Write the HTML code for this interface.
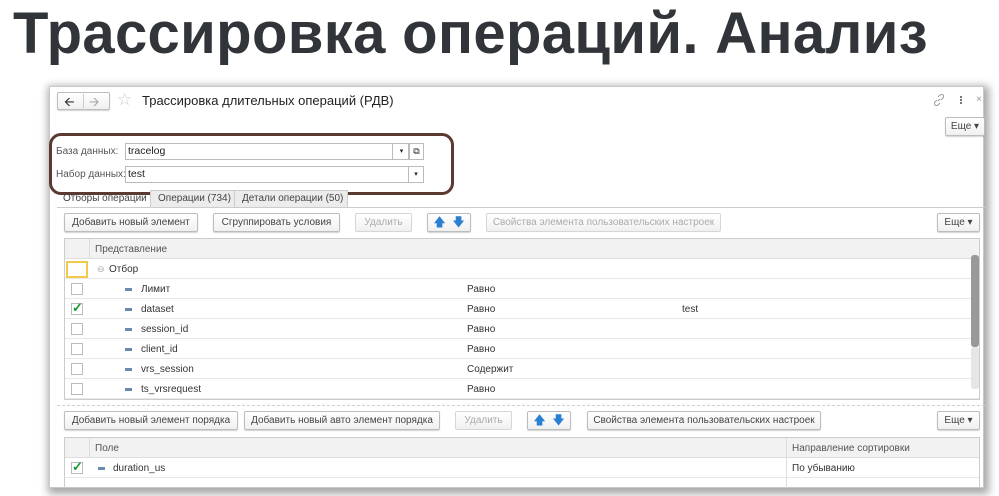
<!DOCTYPE html>
<html><head><meta charset="utf-8"><style>
*{box-sizing:border-box;margin:0;padding:0}
body{width:999px;height:496px;background:#fff;position:relative;overflow:hidden;font-family:"Liberation Sans",Arial,sans-serif;font-size:10px;color:#333}
.a{position:absolute}
h1{position:absolute;left:13px;top:1px;font-size:58px;font-weight:bold;color:#313438;letter-spacing:0.35px;white-space:nowrap;line-height:66px}
.win{left:49px;top:86px;width:935px;height:402px;background:#fff;border:1px solid #c8c8c8;box-shadow:2px 3px 8px 3px rgba(0,0,0,0.35)}
.btn{position:absolute;height:19px;border:1px solid #bdbdbd;border-radius:2px;background:linear-gradient(#fff,#f0f0f0);box-shadow:0 1px 1px rgba(0,0,0,.18);text-align:center;line-height:17px;font-size:10px;color:#444;white-space:nowrap}
.dis{color:#aaa;border-color:#d6d6d6;box-shadow:none}
.tx{position:absolute;white-space:nowrap;font-size:10px;color:#333}
.row{position:absolute;left:0;right:0;height:20px;border-bottom:1px solid #e8e8e8}
.row .tx{top:5px!important}
.cb{position:absolute;left:6px;top:4px;width:12px;height:12px;border:1px solid #bbb;background:#fff}
.dash{position:absolute;width:7px;height:3px;background:#6a8ab0;top:9px}
.inp{position:absolute;height:17px;border:1px solid #bbb;background:#fff;font-size:10.5px;line-height:15px;padding-left:2px;color:#222}
</style></head><body>
<h1>Трассировка операций. Анализ</h1>
<div class="a win"></div>

<div class="btn" style="left:57px;top:92px;width:53px;height:18px"></div>
<div class="a" style="left:83px;top:94px;width:1px;height:14px;background:#ccc"></div>
<div class="tx" style="left:64px;top:93px;font-size:13px;color:#333">&#129128;</div>
<div class="tx" style="left:89px;top:93px;font-size:13px;color:#aaa">&#129130;</div>
<div class="tx" style="left:117px;top:90px;font-size:17px;color:#ccc">☆</div>
<div class="tx" style="left:142px;top:93px;font-size:13px;color:#222">Трассировка длительных операций (РДВ)</div>
<svg class="a" style="left:933px;top:94px" width="12" height="12" viewBox="0 0 12 12"><path d="M5 7l2-2M4 6L2 8a2 2 0 003 3l2-2M8 6l2-2a2 2 0 00-3-3L5 3" stroke="#999" fill="none"/></svg>
<div class="a" style="left:960px;top:96px;width:2px;height:2px;background:#777;box-shadow:0 3px 0 #777,0 6px 0 #777"></div>
<div class="tx" style="left:976px;top:94px;color:#999">×</div>
<div class="btn" style="left:945px;top:117px;width:40px">Еще ▾</div>

<div class="a" style="left:49px;top:133px;width:405px;height:62px;border:3px solid #5b3a33;border-radius:12px"></div>
<div class="tx" style="left:56px;top:146px;color:#555">База данных:</div>
<div class="inp" style="left:125px;top:143px;width:284px">tracelog</div>
<div class="inp" style="left:392px;top:143px;width:17px;text-align:center;font-size:7px">▾</div>
<div class="inp" style="left:409px;top:143px;width:15px;font-size:9px;padding:0;text-align:center">⧉</div>
<div class="tx" style="left:56px;top:169px;color:#555">Набор данных:</div>
<div class="inp" style="left:125px;top:166px;width:299px">test</div>
<div class="inp" style="left:408px;top:166px;width:16px;text-align:center;font-size:7px;padding:0">▾</div>

<div class="a" style="left:57px;top:207px;width:928px;height:1px;background:#ccc"></div>
<div class="a" style="left:150px;top:190px;width:85px;height:18px;background:#ececec;border:1px solid #ccc"></div>
<div class="a" style="left:234px;top:190px;width:114px;height:18px;background:#ececec;border:1px solid #ccc"></div>
<div class="tx" style="left:63px;top:193px;color:#444">Отборы операций</div>
<div class="tx" style="left:158px;top:193px;color:#444">Операции (734)</div>
<div class="tx" style="left:242px;top:193px;color:#444">Детали операции (50)</div>

<div class="btn" style="left:64px;top:213px;width:134px">Добавить новый элемент</div>
<div class="btn" style="left:213px;top:213px;width:127px">Сгруппировать условия</div>
<div class="btn dis" style="left:355px;top:213px;width:57px">Удалить</div>
<div class="btn" style="left:427px;top:213px;width:44px;color:#2a7fd0;font-size:12px">🡅&nbsp;&nbsp;🡇</div>
<div class="btn dis" style="left:486px;top:213px;width:235px">Свойства элемента пользовательских настроек</div>
<div class="btn" style="left:937px;top:213px;width:43px">Еще ▾</div>

<div class="a" style="left:64px;top:238px;width:916px;height:162px;border:1px solid #ccc;overflow:hidden">
 <div class="a" style="left:0;top:0;right:0;height:20px;background:#f2f2f2;border-bottom:1px solid #ddd"></div>
 <div class="a" style="left:24px;top:0;width:1px;height:20px;background:#ddd"></div>
 <div class="tx" style="left:30px;top:5px;color:#555">Представление</div>
 <div class="row" style="top:20px"><div class="a" style="left:1px;top:2px;width:22px;height:17px;border:2px solid #f2c94c"></div><div class="tx" style="left:32px;color:#aaa;font-size:9px">⊖</div><div class="tx" style="left:44px">Отбор</div></div>
 <div class="row" style="top:40px"><div class="cb"></div><div class="dash" style="left:60px"></div><div class="tx" style="left:76px">Лимит</div><div class="tx" style="left:402px">Равно</div></div>
 <div class="row" style="top:60px"><div class="cb"></div><div class="a" style="left:7px;top:1px;color:#1a9a2a;font-size:13px;font-weight:bold">✓</div><div class="dash" style="left:60px"></div><div class="tx" style="left:76px">dataset</div><div class="tx" style="left:402px">Равно</div><div class="tx" style="left:617px">test</div></div>
 <div class="row" style="top:80px"><div class="cb"></div><div class="dash" style="left:60px"></div><div class="tx" style="left:76px">session_id</div><div class="tx" style="left:402px">Равно</div></div>
 <div class="row" style="top:100px"><div class="cb"></div><div class="dash" style="left:60px"></div><div class="tx" style="left:76px">client_id</div><div class="tx" style="left:402px">Равно</div></div>
 <div class="row" style="top:120px"><div class="cb"></div><div class="dash" style="left:60px"></div><div class="tx" style="left:76px">vrs_session</div><div class="tx" style="left:402px">Содержит</div></div>
 <div class="row" style="top:140px"><div class="cb"></div><div class="dash" style="left:60px"></div><div class="tx" style="left:76px">ts_vrsrequest</div><div class="tx" style="left:402px">Равно</div></div>
 <div class="a" style="left:906px;top:16px;width:8px;height:92px;background:#999;border-radius:3px"></div>
 <div class="a" style="left:906px;top:108px;width:8px;height:42px;background:#e6e6e6;border-radius:3px"></div>
</div>
<div class="a" style="left:57px;top:405px;width:928px;border-top:1px dashed #d0d0d0"></div>

<div class="btn" style="left:64px;top:411px;width:174px">Добавить новый элемент порядка</div>
<div class="btn" style="left:244px;top:411px;width:196px">Добавить новый авто элемент порядка</div>
<div class="btn dis" style="left:455px;top:411px;width:57px">Удалить</div>
<div class="btn" style="left:527px;top:411px;width:44px;color:#2a7fd0;font-size:12px">🡅&nbsp;&nbsp;🡇</div>
<div class="btn" style="left:587px;top:411px;width:234px">Свойства элемента пользовательских настроек</div>
<div class="btn" style="left:937px;top:411px;width:43px">Еще ▾</div>

<div class="a" style="left:64px;top:437px;width:916px;height:51px;border:1px solid #ccc;border-bottom:none;overflow:hidden">
 <div class="a" style="left:0;top:0;right:0;height:20px;background:#f2f2f2;border-bottom:1px solid #ddd"></div>
 <div class="a" style="left:24px;top:0;width:1px;height:20px;background:#ddd"></div>
 <div class="a" style="left:721px;top:0;width:1px;height:51px;background:#ddd"></div>
 <div class="tx" style="left:30px;top:5px;color:#555">Поле</div>
 <div class="tx" style="left:727px;top:5px;color:#555">Направление сортировки</div>
 <div class="row" style="top:20px"><div class="cb"></div><div class="a" style="left:7px;top:1px;color:#1a9a2a;font-size:13px;font-weight:bold">✓</div><div class="dash" style="left:33px"></div><div class="tx" style="left:48px">duration_us</div><div class="tx" style="left:727px">По убыванию</div></div>
</div>
</body></html>
